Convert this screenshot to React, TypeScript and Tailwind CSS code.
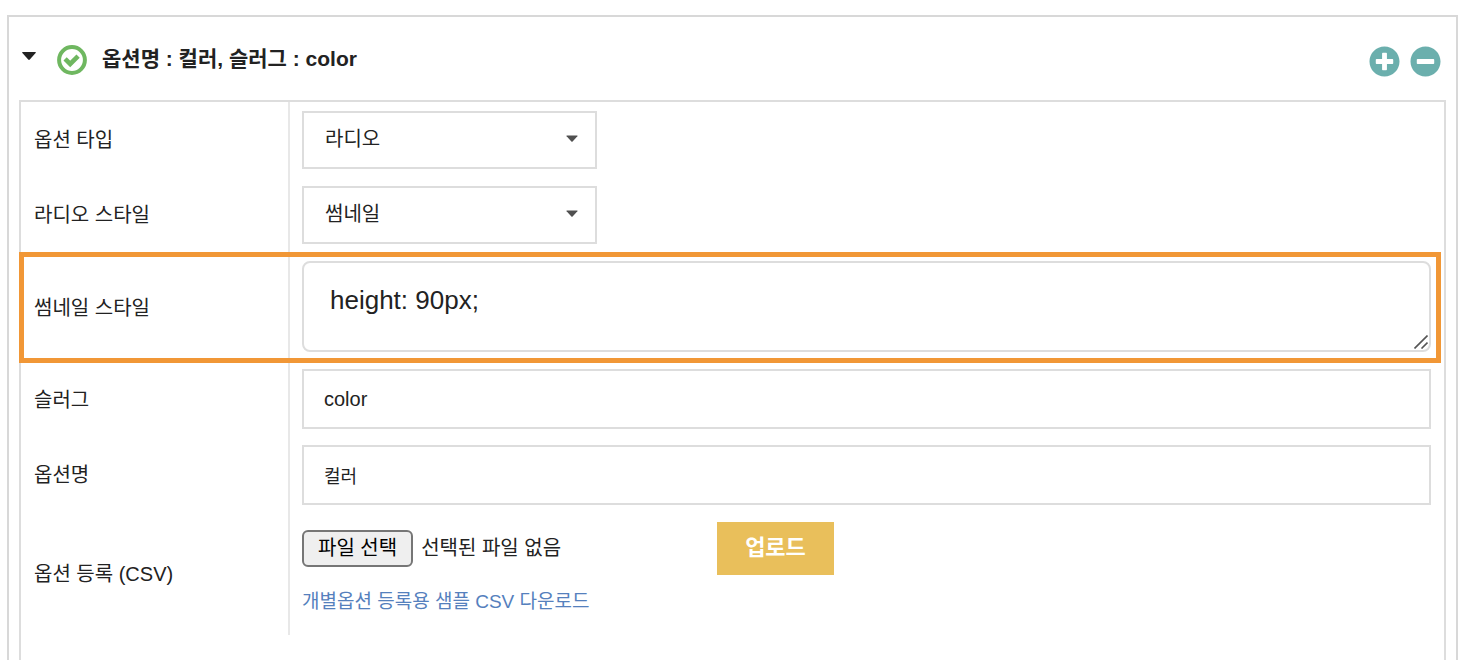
import { useRef, useState, type ReactNode } from "react";
import { FaMinusCircle, FaPlusCircle } from "react-icons/fa";

type RowProps = {
  label: string;
  htmlFor: string;
  highlight?: boolean;
  className?: string;
  children: ReactNode;
};

function Row({ label, htmlFor, highlight, className, children }: RowProps) {
  return (
    <div className="relative flex">
      <label
        htmlFor={htmlFor}
        className="flex w-[269px] shrink-0 items-center border-r-2 border-[#e8e8e8] pl-[13px] leading-7"
      >
        {label}
      </label>
      <div className={`min-w-0 flex-1 pl-3 pr-[13px] ${className ?? "py-2"}`}>
        {children}
      </div>
      {highlight && (
        <div className="pointer-events-none absolute inset-y-0 -left-0.5 right-[3px] border-5 border-[#f19736]" />
      )}
    </div>
  );
}

function Select({ id, options }: { id: string; options: string[] }) {
  return (
    <div className="relative w-[295px]">
      <select
        id={id}
        className="block h-[58px] w-full appearance-none border-2 border-[#ddd] bg-white pb-0.5 pl-[21px] pr-12 outline-none"
      >
        {options.map((option) => (
          <option key={option}>{option}</option>
        ))}
      </select>
      <svg
        viewBox="0 0 12 7"
        className="pointer-events-none absolute right-[19px] top-6 h-[7px] w-3 fill-[#505050]"
      >
        <path d="M1 0.5h10q1 0 0.4 0.8L6.6 6.4q-0.6 0.6-1.2 0L0.6 1.3Q0 0.5 1 0.5z" />
      </svg>
    </div>
  );
}

export default function App() {
  const fileRef = useRef<HTMLInputElement>(null);
  const [fileName, setFileName] = useState("");

  return (
    <div className="flex min-h-screen flex-col bg-white pl-[7px] pr-2 pt-[15px] font-['Liberation_Sans','Noto_Sans_CJK_KR',sans-serif] text-[20px] text-[#222]">
      <section className="flex flex-1 flex-col border-2 border-b-0 border-[#d8d8d8] px-2.5">
        {/* Header */}
        <header className="flex items-start pb-[23px] pl-[3px] pr-[5px] pt-7">
          <button aria-label="접기" className="flex h-[22px] items-center">
            <svg viewBox="0 0 14 8" className="h-2 w-3.5 fill-[#222]">
              <path d="M0.8 0h12.4q1.2 0 0.4 1L7.8 7.5q-0.8 0.8-1.6 0L0.4 1Q-0.4 0 0.8 0z" />
            </svg>
          </button>
          <svg viewBox="0 0 30 30" className="ml-[21px] size-[30px]">
            <circle cx="15" cy="15" r="12.9" fill="none" stroke="#6fb760" strokeWidth="4" />
            <path
              d="M8.1 13.9l5.1 5.1 7.9-7.9"
              fill="none"
              stroke="#6fb760"
              strokeWidth="4.6"
            />
          </svg>
          <h2 className="ml-[15px] flex-1 text-[21px] font-bold leading-7">
            옵션명 : 컬러, 슬러그 : color
          </h2>
          <div className="flex gap-2.5 pt-px text-[31px] text-[#6bafad]">
            <button aria-label="추가">
              <FaPlusCircle />
            </button>
            <button aria-label="삭제">
              <FaMinusCircle />
            </button>
          </div>
        </header>

        {/* Option form */}
        <div className="flex-1 border-2 border-b-0 border-[#ddd]">
          <Row label="옵션 타입" htmlFor="type" className="pb-2 pt-[9px]">
            <Select id="type" options={["라디오", "셀렉트"]} />
          </Row>
          <Row label="라디오 스타일" htmlFor="radio-style" className="pb-2 pt-[9px]">
            <Select id="radio-style" options={["썸네일", "기본"]} />
          </Row>
          <Row
            label="썸네일 스타일"
            htmlFor="thumb-style"
            className="pb-[11px] pt-[9px]"
            highlight
          >
            <div className="relative">
              <textarea
                id="thumb-style"
                defaultValue="height: 90px;"
                className="block h-[91px] w-full resize-none rounded-lg border-2 border-[#ddd] bg-white px-[26px] pt-[19px] text-[26px] leading-9 outline-none"
              />
              <svg
                viewBox="0 0 14 14"
                className="pointer-events-none absolute bottom-[3px] right-[3px] size-3.5"
                fill="none"
                stroke="#555"
                strokeWidth="1.6"
              >
                <path d="M0.5 13.5L13.5 0.5M7.5 13.5L13.5 7.5" />
              </svg>
            </div>
          </Row>
          <Row label="슬러그" htmlFor="slug" className="pb-2 pt-1.5">
            <input
              id="slug"
              defaultValue="color"
              className="block h-[60px] w-full border-2 border-[#ddd] px-5 outline-none"
            />
          </Row>
          <Row label="옵션명" htmlFor="name">
            <input
              id="name"
              defaultValue="컬러"
              className="block h-[60px] w-full border-2 border-[#ddd] px-5 text-[18px] outline-none"
            />
          </Row>
          <Row label="옵션 등록 (CSV)" htmlFor="csv" className="pb-[18px] pt-[9px]">
            <div className="flex">
              <div className="flex w-[415px] items-center gap-2">
                <input
                  ref={fileRef}
                  id="csv"
                  type="file"
                  accept=".csv"
                  className="sr-only"
                  onChange={(e) => setFileName(e.target.files?.[0]?.name ?? "")}
                />
                <button
                  onClick={() => fileRef.current?.click()}
                  className="h-[37px] rounded-md border-2 border-[#767676] bg-[#efefef] px-3.5 pb-0.5 leading-7 text-black"
                >
                  파일 선택
                </button>
                <span className="pb-0.5 leading-7">{fileName || "선택된 파일 없음"}</span>
              </div>
              <button className="h-[53px] w-[117px] bg-[#e9bf5b] pb-0.5 text-[22px] font-bold text-white">
                업로드
              </button>
            </div>
            <a
              href="#sample"
              className="mt-3 block text-[19px] leading-[30px] text-[#5580bd]"
            >
              개별옵션 등록용 샘플 CSV 다운로드
            </a>
          </Row>
        </div>
      </section>
    </div>
  );
}
